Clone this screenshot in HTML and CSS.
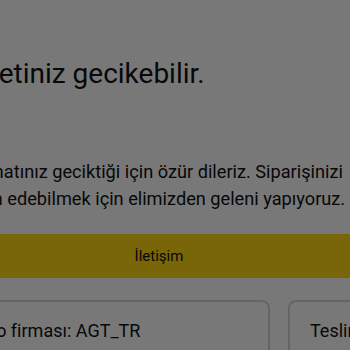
FILE: index.html
```html
<!DOCTYPE html>
<html lang="tr">
<head>
    <meta charset="UTF-8">
    <meta name="viewport" content="width=device-width, initial-scale=1.0">
    <title>Sipariş durumu</title>
    <link rel="stylesheet" href="styles.css">
</head>
<body>

    <div class="page">
        <h1 class="title">Paketiniz gecikebilir.</h1>

        <p class="message">
            <span class="line">Teslimatınız geciktiği için özür dileriz. Siparişinizi</span>
            <span class="line line-2">teslim edebilmek için elimizden geleni yapıyoruz.</span>
        </p>

        <button class="contact">İletişim</button>

        <div class="cards">
            <div class="card card-left">
                <p class="card-text">Kargo firması: AGT_TR</p>
            </div>
            <div class="card card-right">
                <p class="card-text">Teslimat</p>
            </div>
        </div>
    </div>

    <div class="overlay"></div>

</body>
</html>
```

FILE: styles.css
```css
body {
    margin: 0;
    background-color: #ffffff;
    color: #0f1111;
    font-family: Roboto, "Liberation Sans", sans-serif;
    overflow: hidden;
}
.page {
    margin-left: -48px;
    padding-top: 56px;
}
.title {
    font-size: 28px;
    font-weight: 400;
    line-height: 36px;
    margin: 0;
}
.message {
    font-size: 18.2px;
    line-height: 27px;
    margin: 66px 0 0 -2px;
}
.line {
    display: block;
    white-space: nowrap;
}
.line-2 {
    text-indent: 3px;
}
.contact {
    display: block;
    width: 414px;
    height: 44px;
    margin-top: 22px;
    border: none;
    border-radius: 8px;
    background-color: #ffd814;
    color: #0f1111;
    font-family: inherit;
    font-size: 15px;
}
.cards {
    display: flex;
    gap: 18px;
    margin-top: 22px;
}
.card {
    flex: none;
    height: 120px;
    border: 2px solid #d5d9d9;
    border-radius: 8px;
    padding: 17px 20px;
    box-sizing: border-box;
}
.card-left {
    width: 333px;
    margin-left: -15px;
}
.card-right {
    width: 300px;
}
.card-text {
    margin: 0;
    font-size: 18px;
    line-height: 24px;
    white-space: nowrap;
}
.overlay {
    position: fixed;
    top: 0;
    left: 0;
    right: 0;
    bottom: 0;
    background-color: rgba(0, 0, 0, 0.53);
}
```
